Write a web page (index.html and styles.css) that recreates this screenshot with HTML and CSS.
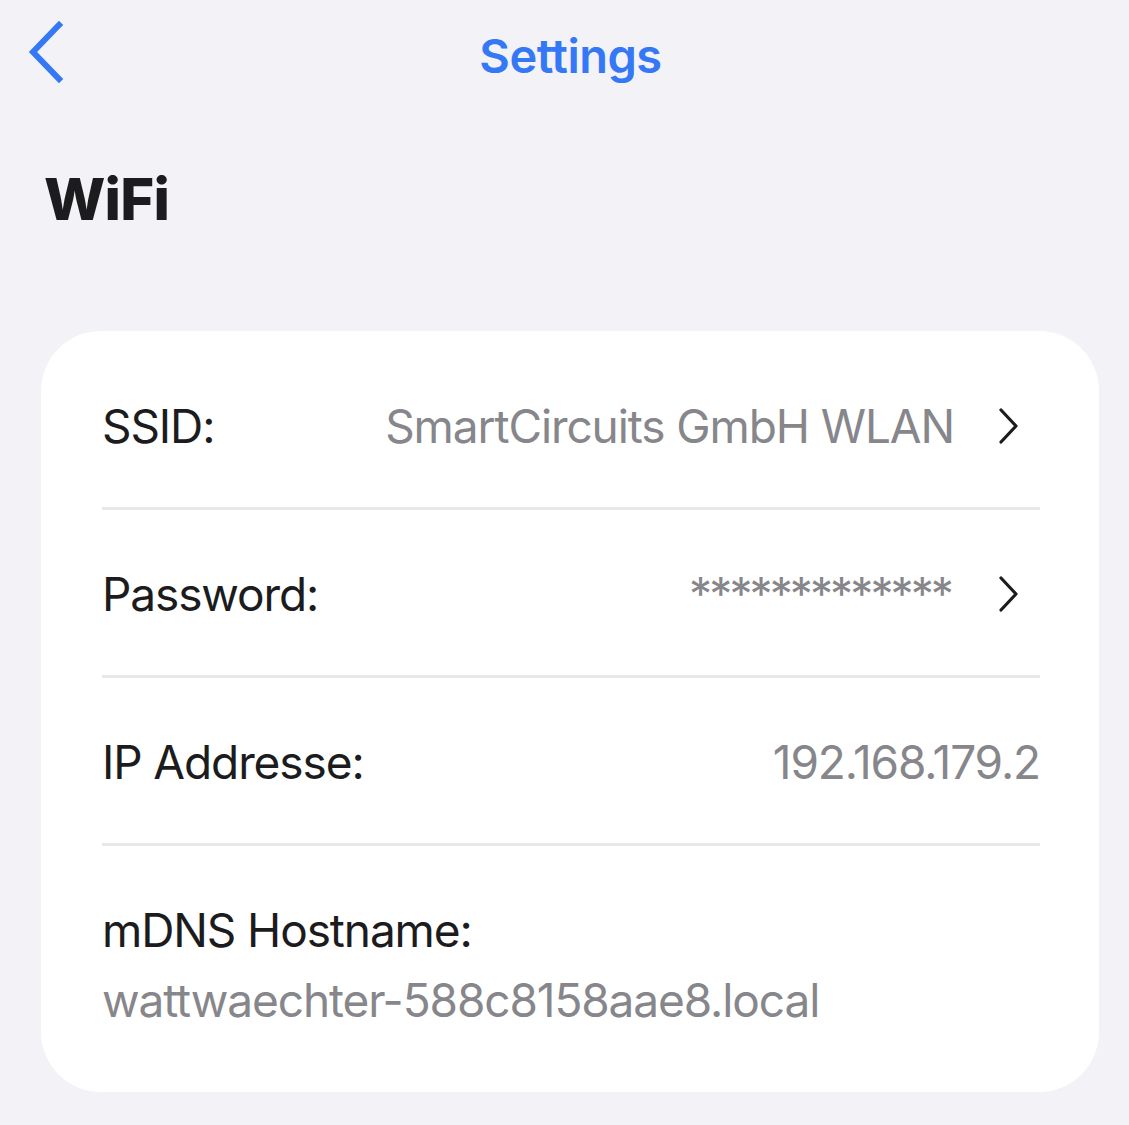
FILE: index.html
```html
<!DOCTYPE html>
<html>
<head lang="en">
    <meta charset="UTF-8">
    <title>WiFi</title>

    <link rel="stylesheet" href="styles.css">
</head>
<body>
    <nav class="navbar">
        <a class="back" href="#">
            <svg width="40" height="62" viewBox="0 0 40 62">
                <path d="M33 4 L7 31 L33 58" fill="none" stroke="currentColor" stroke-width="6" stroke-linecap="square"/>
            </svg>
        </a>
        <span class="nav-title">Settings</span>
    </nav>

    <h1 class="page-title">WiFi</h1>

    <section class="group">
        <div class="row link">
            <span class="label">SSID:</span>
            <span class="value">SmartCircuits GmbH WLAN</span>
            <svg class="chevron" width="22" height="38" viewBox="0 0 22 38">
                <path d="M3 3 L18 19 L3 35" fill="none" stroke="currentColor" stroke-width="3.2" stroke-linecap="round" stroke-linejoin="round"/>
            </svg>
        </div>
        <div class="row link">
            <span class="label">Password:</span>
            <span class="value masked">*************</span>
            <svg class="chevron" width="22" height="38" viewBox="0 0 22 38">
                <path d="M3 3 L18 19 L3 35" fill="none" stroke="currentColor" stroke-width="3.2" stroke-linecap="round" stroke-linejoin="round"/>
            </svg>
        </div>
        <div class="row">
            <span class="label">IP Addresse:</span>
            <span class="value">192.168.179.2</span>
        </div>
        <div class="row stacked">
            <span class="label">mDNS Hostname:</span>
            <span class="value">wattwaechter-588c8158aae8.local</span>
        </div>
    </section>
</body>
</html>
```

FILE: styles.css
```css
body {
    margin: 0;
    background-color: #f2f2f7;
    font-family: Inter, "Noto Sans", sans-serif;
    color: #1c1c1e;
}

.navbar {
    position: relative;
    display: flex;
    align-items: center;
    justify-content: center;
    height: 110px;
}

.navbar .back {
    position: absolute;
    left: 26px;
    top: 21px;
    color: #3478f6;
    display: block;
    line-height: 0;
}

.nav-title {
    color: #3478f6;
    font-size: 47px;
    font-weight: 600;
    letter-spacing: -0.5px;
    margin-left: 12px;
}

.page-title {
    margin: 54px 0 0 44px;
    font-size: 58px;
    font-weight: 800;
    line-height: 70px;
    letter-spacing: -0.8px;
}

.group {
    margin: 97px 30px 0 41px;
    padding: 11px 59px 10px 61px;
    background-color: #fff;
    border-radius: 60px;
}

.row {
    display: flex;
    align-items: center;
    padding: 49px 0 46px;
    border-bottom: 3px solid #e7e7ec;
    font-size: 46px;
    line-height: 70px;
    letter-spacing: -1.1px;
}

.row .label {
    flex: 1;
}

.row .value {
    color: #86868b;
}

.row .value.masked {
    letter-spacing: -2.9px;
    margin-right: 3px;
}

.row .chevron {
    color: #1c1c1e;
    margin-left: 44px;
    margin-right: 20px;
}

.row.stacked {
    display: block;
    border-bottom: 0;
    padding-bottom: 47px;
}

.row.stacked .label,
.row.stacked .value {
    display: block;
}
```
